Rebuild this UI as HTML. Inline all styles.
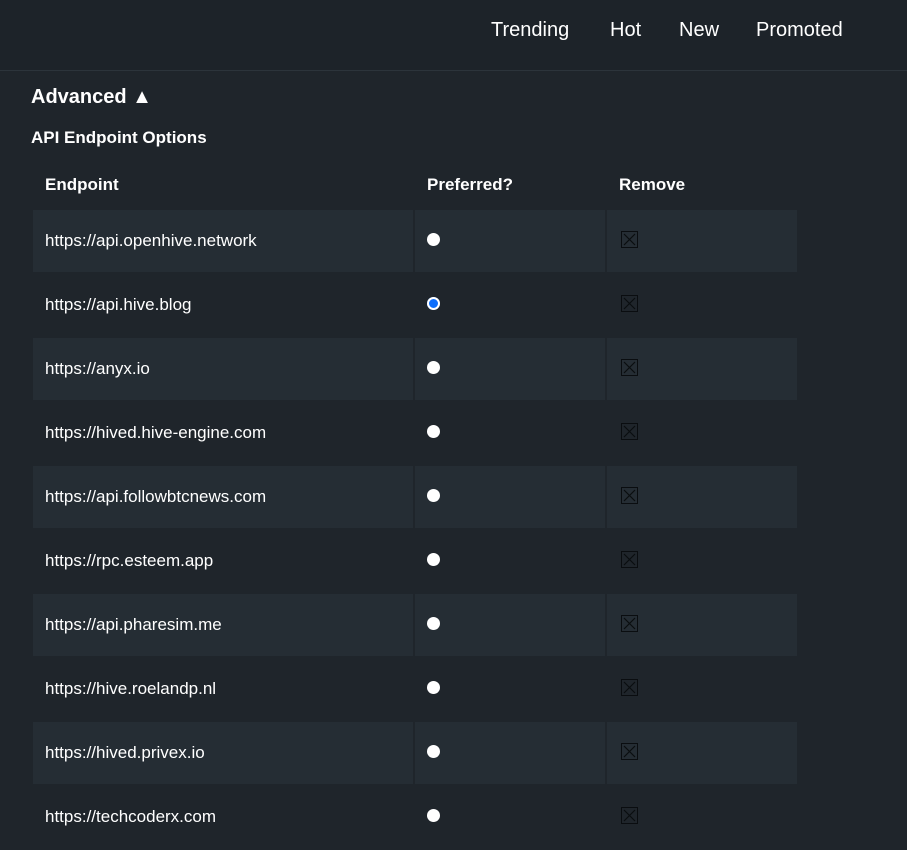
<!DOCTYPE html>
<html><head><style>
body{margin:0;background:#1f252b;width:907px;height:847px;overflow:hidden;font-family:"Liberation Sans",sans-serif;color:#fff}
.hdr{height:70px;border-bottom:1px solid #2c343b;background:#1d2329;position:relative}
.hdr span{position:absolute;top:19px;font-size:20px}
h2{position:absolute;left:31px;top:86px;margin:0;font-size:20px;font-weight:bold}
h3{position:absolute;left:31px;top:128px;margin:0;font-size:17px;font-weight:bold}
table{position:absolute;left:33px;top:160px;border-collapse:separate;border-spacing:2px 0;margin-left:-2px}
th{height:46px;text-align:left;padding:0 12px;font-size:17px;font-weight:bold;vertical-align:middle;padding-bottom:0}
td{height:62px;padding:0 12px;font-size:17px;border-bottom:2px solid #1f252b;vertical-align:middle}
tr.o td{background:#252d34}
td.a{width:356px}td.b{width:166px}td.c{width:166px}
.r{display:inline-block;width:13px;height:13px;border-radius:50%;background:#fff;vertical-align:middle;margin-top:-4px}
.r.s{background:#0b6efd;box-shadow:inset 0 0 0 2px #fff}
.x{display:inline-block;width:17px;height:17px;margin-left:2px;margin-top:-4px;vertical-align:middle}
</style></head><body>
<div class="hdr"><span style="left:491px">Trending</span><span style="left:610px">Hot</span><span style="left:679px">New</span><span style="left:756px">Promoted</span></div>
<h2>Advanced ▲</h2>
<h3>API Endpoint Options</h3>
<table>
<tr><th style="height:50px">Endpoint</th><th>Preferred?</th><th>Remove</th></tr>
<tr class="o"><td class="a">https://api.openhive.network</td><td class="b"><span class="r"></span></td><td class="c"><svg class="x" viewBox="0 0 17 17"><rect x="0.5" y="0.5" width="16" height="16" fill="none" stroke="#0a0d10"/><path d="M3 3L14 14M14 3L3 14" stroke="#0a0d10" stroke-width="1.2"/></svg></td></tr>
<tr><td class="a">https://api.hive.blog</td><td class="b"><span class="r s"></span></td><td class="c"><svg class="x" viewBox="0 0 17 17"><rect x="0.5" y="0.5" width="16" height="16" fill="none" stroke="#0a0d10"/><path d="M3 3L14 14M14 3L3 14" stroke="#0a0d10" stroke-width="1.2"/></svg></td></tr>
<tr class="o"><td class="a">https://anyx.io</td><td class="b"><span class="r"></span></td><td class="c"><svg class="x" viewBox="0 0 17 17"><rect x="0.5" y="0.5" width="16" height="16" fill="none" stroke="#0a0d10"/><path d="M3 3L14 14M14 3L3 14" stroke="#0a0d10" stroke-width="1.2"/></svg></td></tr>
<tr><td class="a">https://hived.hive-engine.com</td><td class="b"><span class="r"></span></td><td class="c"><svg class="x" viewBox="0 0 17 17"><rect x="0.5" y="0.5" width="16" height="16" fill="none" stroke="#0a0d10"/><path d="M3 3L14 14M14 3L3 14" stroke="#0a0d10" stroke-width="1.2"/></svg></td></tr>
<tr class="o"><td class="a">https://api.followbtcnews.com</td><td class="b"><span class="r"></span></td><td class="c"><svg class="x" viewBox="0 0 17 17"><rect x="0.5" y="0.5" width="16" height="16" fill="none" stroke="#0a0d10"/><path d="M3 3L14 14M14 3L3 14" stroke="#0a0d10" stroke-width="1.2"/></svg></td></tr>
<tr><td class="a">https://rpc.esteem.app</td><td class="b"><span class="r"></span></td><td class="c"><svg class="x" viewBox="0 0 17 17"><rect x="0.5" y="0.5" width="16" height="16" fill="none" stroke="#0a0d10"/><path d="M3 3L14 14M14 3L3 14" stroke="#0a0d10" stroke-width="1.2"/></svg></td></tr>
<tr class="o"><td class="a">https://api.pharesim.me</td><td class="b"><span class="r"></span></td><td class="c"><svg class="x" viewBox="0 0 17 17"><rect x="0.5" y="0.5" width="16" height="16" fill="none" stroke="#0a0d10"/><path d="M3 3L14 14M14 3L3 14" stroke="#0a0d10" stroke-width="1.2"/></svg></td></tr>
<tr><td class="a">https://hive.roelandp.nl</td><td class="b"><span class="r"></span></td><td class="c"><svg class="x" viewBox="0 0 17 17"><rect x="0.5" y="0.5" width="16" height="16" fill="none" stroke="#0a0d10"/><path d="M3 3L14 14M14 3L3 14" stroke="#0a0d10" stroke-width="1.2"/></svg></td></tr>
<tr class="o"><td class="a">https://hived.privex.io</td><td class="b"><span class="r"></span></td><td class="c"><svg class="x" viewBox="0 0 17 17"><rect x="0.5" y="0.5" width="16" height="16" fill="none" stroke="#0a0d10"/><path d="M3 3L14 14M14 3L3 14" stroke="#0a0d10" stroke-width="1.2"/></svg></td></tr>
<tr><td class="a">https://techcoderx.com</td><td class="b"><span class="r"></span></td><td class="c"><svg class="x" viewBox="0 0 17 17"><rect x="0.5" y="0.5" width="16" height="16" fill="none" stroke="#0a0d10"/><path d="M3 3L14 14M14 3L3 14" stroke="#0a0d10" stroke-width="1.2"/></svg></td></tr>
</table>
</body></html>
